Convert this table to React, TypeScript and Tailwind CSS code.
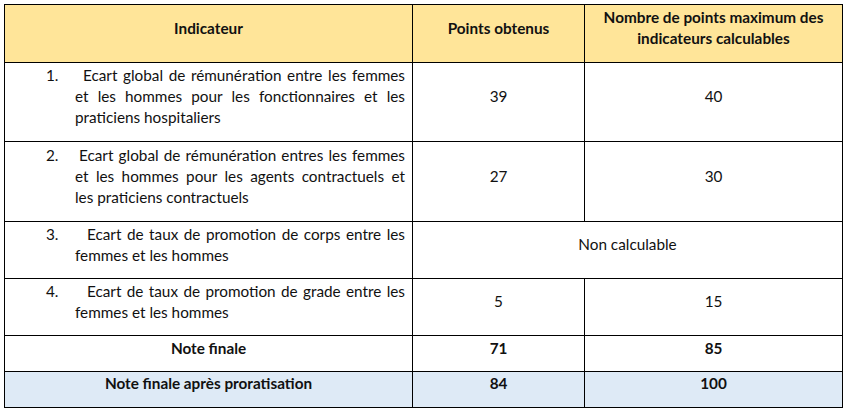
const rows = [
  {
    num: "1.",
    gap: "w-[37px]",
    lines: [
      "Ecart global de rémunération entre les femmes",
      "et les hommes pour les fonctionnaires et les",
      "praticiens hospitaliers",
    ],
    points: "39",
    max: "40",
    height: "h-[79px]",
  },
  {
    num: "2.",
    gap: "w-[33px]",
    lines: [
      "Ecart global de rémunération entres les femmes",
      "et les hommes pour les agents contractuels et",
      "les praticiens contractuels",
    ],
    points: "27",
    max: "30",
    height: "h-[80px]",
  },
  {
    num: "3.",
    gap: "w-[41px]",
    lines: ["Ecart de taux de promotion de corps entre les", "femmes et les hommes"],
    points: null,
    max: null,
    height: "h-[57px]",
  },
  {
    num: "4.",
    gap: "w-[41px]",
    lines: ["Ecart de taux de promotion de grade entre les", "femmes et les hommes"],
    points: "5",
    max: "15",
    height: "h-[57px]",
  },
];

const cell = "border border-black align-middle pt-[1px] pb-[12px]";
const lastCell = "border border-black align-middle pt-0 pb-[14px]";

const App = () => {
  return (
    <div className="bg-white w-[843px] h-[411px] pt-[4px] pl-[4px] text-[#111] font-['Lato','Liberation_Sans',sans-serif] text-[15.3px]">
      <table className="border-collapse table-fixed w-[838px]">
        <colgroup>
          <col className="w-[408px]" />
          <col className="w-[172px]" />
          <col className="w-[258px]" />
        </colgroup>
        <thead>
          <tr className="h-[58px] bg-[#ffe599] font-bold leading-[21px]">
            <th className={`${cell} text-center`}>Indicateur</th>
            <th className={`${cell} text-center`}>Points obtenus</th>
            <th className={`${cell} text-center px-2`}>
              Nombre de points maximum des
              <br />
              indicateurs calculables
            </th>
          </tr>
        </thead>
        <tbody>
          {rows.map((row) => (
            <tr key={row.num} className={`${row.height} leading-[21px]`}>
              <td className={`${cell} pl-[70px] pr-[7px]`}>
                {row.lines.map((line, i) =>
                  i === 0 ? (
                    <div key={i} className="flex -ml-[29px]">
                      <span className={`${row.gap} shrink-0`}>{row.num}</span>
                      <span className="flex-1 text-justify [text-align-last:justify]">{line}</span>
                    </div>
                  ) : (
                    <div
                      key={i}
                      className={
                        i < row.lines.length - 1
                          ? "text-justify [text-align-last:justify]"
                          : "text-left"
                      }
                    >
                      {line}
                    </div>
                  )
                )}
              </td>
              {row.points === null ? (
                <td colSpan={2} className={`${cell} text-center`}>
                  Non calculable
                </td>
              ) : (
                <>
                  <td className={`${cell} text-center`}>{row.points}</td>
                  <td className={`${cell} text-center`}>{row.max}</td>
                </>
              )}
            </tr>
          ))}
          <tr className="h-[36px] font-bold leading-[21px]">
            <td className={`${cell} text-center`}>Note finale</td>
            <td className={`${cell} text-center`}>71</td>
            <td className={`${cell} text-center`}>85</td>
          </tr>
          <tr className="h-[36px] font-bold bg-[#deeaf6] leading-[20px]">
            <td className={`${lastCell} text-center`}>Note finale après proratisation</td>
            <td className={`${lastCell} text-center`}>84</td>
            <td className={`${lastCell} text-center`}>100</td>
          </tr>
        </tbody>
      </table>
    </div>
  );
};

export default App;
